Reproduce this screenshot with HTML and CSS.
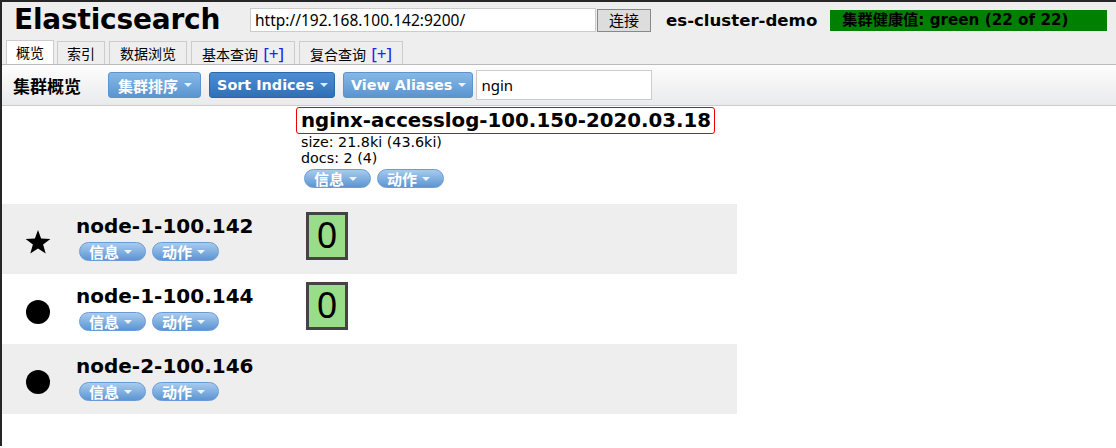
FILE: index.html
```html
<!DOCTYPE html>
<html>
<head>
<meta charset="utf-8">
<link rel="stylesheet" href="styles.css">
</head>
<body>
<div class="page">
  <div class="top">
    <div class="bar">
      <h1 class="title">Elasticsearch</h1>
      <input class="url" type="text" value="http://192.168.100.142:9200/">
      <button class="connect">连接</button>
      <span class="cluster">es-cluster-demo</span>
      <span class="health">集群健康值: green (22 of 22)</span>
    </div>
    <div class="tabs">
      <div class="tab active">概览</div>
      <div class="tab">索引</div>
      <div class="tab wide">数据浏览</div>
      <div class="tab wide">基本查询 <span class="plus">[+]</span></div>
      <div class="tab wide">复合查询 <span class="plus">[+]</span></div>
    </div>
  </div>
  <div class="toolbar">
    <span class="tb-title">集群概览</span>
    <span class="btn light first">集群排序 <i class="caret"></i></span>
    <span class="btn dark">Sort Indices <i class="caret"></i></span>
    <span class="btn light">View Aliases <i class="caret"></i></span>
    <input class="filter" type="text" value="ngin">
  </div>
  <div class="grid">
    <div class="row head">
      <div class="node-cell"></div>
      <div class="shard-cell idx">
        <div class="idx-name">nginx-accesslog-100.150-2020.03.18</div>
        <div class="idx-meta">size: 21.8ki (43.6ki)</div>
        <div class="idx-meta">docs: 2 (4)</div>
        <div class="pills idx-pills"><span class="pill">信息 <i class="caret"></i></span><span class="pill">动作 <i class="caret"></i></span></div>
      </div>
    </div>
    <div class="row grey">
      <div class="node-cell">
        <span class="icon star"><svg width="26" height="25" viewBox="0 0 26 25"><polygon points="13,0 16.1,8.6 25.4,8.9 18.1,14.6 20.7,23.6 13,18.4 5.3,23.6 7.9,14.6 0.6,8.9 9.9,8.6" fill="#000"/></svg></span>
        <div class="node-info">
          <div class="node-name">node-1-100.142</div>
          <div class="pills"><span class="pill">信息 <i class="caret"></i></span><span class="pill">动作 <i class="caret"></i></span></div>
        </div>
      </div>
      <div class="shard-cell"><div class="shard">0</div></div>
    </div>
    <div class="row">
      <div class="node-cell">
        <span class="icon dot"></span>
        <div class="node-info">
          <div class="node-name">node-1-100.144</div>
          <div class="pills"><span class="pill">信息 <i class="caret"></i></span><span class="pill">动作 <i class="caret"></i></span></div>
        </div>
      </div>
      <div class="shard-cell"><div class="shard">0</div></div>
    </div>
    <div class="row grey">
      <div class="node-cell">
        <span class="icon dot"></span>
        <div class="node-info">
          <div class="node-name">node-2-100.146</div>
          <div class="pills"><span class="pill">信息 <i class="caret"></i></span><span class="pill">动作 <i class="caret"></i></span></div>
        </div>
      </div>
      <div class="shard-cell"></div>
    </div>
  </div>
</div>
</body>
</html>
```
FILE: styles.css
```css
html, body { margin: 0; padding: 0; background: #fff; }
body {
  font-family: "Noto Sans", "Noto Sans CJK SC", sans-serif;
  color: #000;
}
.page {
  border-top: 2px solid #262626;
  border-left: 2px solid #262626;
  min-height: 446px;
  box-sizing: border-box;
}
.top { background: #eee; }
.bar {
  height: 36px;
  display: flex;
  align-items: center;
  padding-left: 12px;
}
.title {
  margin: 0;
  font-family: "DejaVu Sans", sans-serif;
  font-weight: bold;
  font-size: 28px;
  letter-spacing: -0.2px;
  width: 236px;
  line-height: 34px;
}
.url {
  width: 346px;
  height: 24px;
  box-sizing: border-box;
  border: 1px solid #ccc;
  background: #fff;
  font-family: "Noto Sans", sans-serif;
  font-size: 15.5px;
  padding: 0 4px;
  margin: 0;
  outline: none;
}
.connect {
  margin: 0 0 0 1px;
  width: 54px;
  height: 23px;
  background: #ddd;
  border: 1px solid #888;
  font-family: "Noto Sans CJK SC", sans-serif;
  font-size: 15px;
  padding: 0;
  line-height: 20px;
}
.cluster {
  margin-left: 15px;
  font-family: "DejaVu Sans", sans-serif;
  font-weight: bold;
  font-size: 16.6px;
}
.health {
  margin-left: 13px;
  background: #008000;
  width: 277px;
  height: 21px;
  line-height: 21px;
  box-sizing: border-box;
  padding-left: 12px;
  font-family: "DejaVu Sans", "Noto Sans CJK SC", sans-serif;
  font-weight: bold;
  font-size: 15.2px;
  white-space: nowrap;
}
.tabs {
  height: 26px;
  display: flex;
  align-items: flex-end;
  padding-left: 4px;
  border-bottom: 1px solid #bbb;
  gap: 3px;
}
.tab {
  height: 23px;
  box-sizing: border-box;
  border: 1px solid #ccc;
  border-bottom: none;
  padding: 0 9px;
  font-family: "Noto Sans CJK SC", sans-serif;
  font-size: 14px;
  line-height: 23px;
  background: #eee;
  white-space: nowrap;
}
.tab.wide { padding: 0 10px; margin-left: 1px; }
.tab.active { background: #fff; height: 24px; }
.plus {
  color: #2222ee;
  font-family: "Noto Sans", sans-serif;
  font-size: 17px;
  margin-left: 2px;
}
.toolbar {
  height: 40px;
  display: flex;
  align-items: center;
  padding-left: 11px;
  background: linear-gradient(#fdfdfd, #e9eaec);
  border-bottom: 1px solid #ccc;
}
.tb-title {
  font-family: "Noto Sans CJK SC", sans-serif;
  font-weight: bold;
  font-size: 17px;
  width: 95px;
}
.btn {
  height: 26px;
  box-sizing: border-box;
  display: inline-flex;
  align-items: center;
  padding: 0 6px 0 7px;
  border-radius: 3px;
  color: #fff;
  font-family: "DejaVu Sans", "Noto Sans CJK SC", sans-serif;
  font-weight: bold;
  font-size: 14.4px;
  margin-right: 8px;
  white-space: nowrap;
}
.btn.first { padding: 0 8px 0 9px; font-size: 15px; margin-right: 8px; }
.btn.light {
  background: linear-gradient(#86b8e6, #5a94d1);
  border: 1px solid #5d93cf;
}
.btn.dark {
  background: linear-gradient(#4c8dd2, #2f70b8);
  border: 1px solid #2b67ad;
}
.caret {
  display: inline-block;
  width: 0; height: 0;
  border-left: 4px solid transparent;
  border-right: 4px solid transparent;
  border-top: 4px solid #fff;
  margin-left: 6px;
  opacity: 0.85;
}
.filter {
  margin: 0 0 0 -5px;
  width: 176px;
  height: 30px;
  box-sizing: border-box;
  border: 1px solid #ccc;
  font-family: "Noto Sans", sans-serif;
  font-size: 15px;
  padding: 0 4px;
  outline: none;
}
.grid { width: 735px; }
.row {
  display: grid;
  grid-template-columns: 294px 1fr;
  height: 70px;
}
.row.grey { background: #eee; }
.row.head { height: 98px; }
.node-cell {
  display: flex;
  align-items: flex-start;
}
.icon {
  width: 72px;
  flex: none;
  display: flex;
  justify-content: center;
  padding-top: 20px;
  box-sizing: border-box;
}
.icon.star { padding-top: 26px; }
.icon.star svg { display: block; }
.icon.dot::before {
  content: "";
  width: 24px;
  height: 24px;
  border-radius: 50%;
  background: #000;
  display: block;
  margin-top: 6px;
}
.node-info { padding-top: 9px; padding-left: 2px; }
.node-name {
  font-family: "DejaVu Sans", sans-serif;
  font-weight: bold;
  font-size: 20px;
  line-height: 26px;
}
.pills { display: flex; gap: 6px; padding-left: 3px; margin-top: 3px; }
.pill {
  height: 19px;
  box-sizing: border-box;
  border-radius: 10px;
  border: 1px solid #6a9bd5;
  background: linear-gradient(#a8cbee, #5c95d2);
  color: #fff;
  font-family: "Noto Sans CJK SC", sans-serif;
  font-weight: bold;
  font-size: 15px;
  line-height: 17px;
  padding: 0 6px 0 9px;
  display: inline-flex;
  align-items: center;
  width: 67px;
  white-space: nowrap;
}
.pill .caret { margin-left: 5px; }
.shard-cell { padding: 8px 0 0 10px; }
.shard {
  width: 42px;
  height: 48px;
  box-sizing: border-box;
  border: 3px solid #444;
  background: #99dd88;
  font-family: "Noto Sans", sans-serif;
  font-size: 36px;
  line-height: 40px;
  text-align: center;
}
.idx { padding: 1px 0 0 0; }
.idx-name {
  display: inline-block;
  border: 1px solid #e00;
  border-radius: 3px;
  padding: 0 3px 0 4px;
  font-family: "DejaVu Sans", sans-serif;
  font-weight: bold;
  font-size: 19.8px;
  line-height: 25px;
}
.idx-meta {
  font-family: "DejaVu Sans", sans-serif;
  font-size: 14.3px;
  line-height: 16px;
  padding-left: 5px;
}
.idx-pills { padding-left: 8px; margin-top: 3px; }
```
